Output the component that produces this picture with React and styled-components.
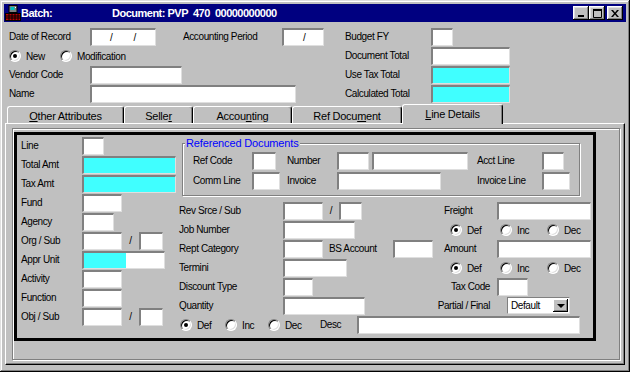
import React from 'react';
import styled, { createGlobalStyle } from 'styled-components';

const GlobalStyle = createGlobalStyle`
  html, body {
    margin: 0;
    padding: 0;
    background: #c0c0c0;
  }
  body {
    font-family: "Liberation Sans", Arial, sans-serif;
    font-size: 10px;
    letter-spacing: -0.4px;
    color: #000;
  }
`;

// read-only (computed) fields: stippled cyan, rendered as its average tint
const hatch = `
  background-color: #40ffff;
`;

const Window = styled.div`
  width: 630px;
  height: 372px;
  box-sizing: border-box;
  padding: 4px;
  background: #c0c0c0;
  box-shadow: inset -1px -1px #000, inset 1px 1px #dfdfdf, inset -2px -2px #808080, inset 2px 2px #fff;
  display: flex;
  flex-direction: column;
`;

const TitleBar = styled.div`
  height: 18px;
  flex: none;
  background: #000080;
  color: #fff;
  font-weight: bold;
  font-size: 11px;
  letter-spacing: -0.5px;
  display: flex;
  align-items: center;
  padding: 0 3px 0 1px;
  white-space: pre;
`;

const TitleText = styled.span`
  width: ${p => p.$w || 'auto'};
`;

const TitleButtons = styled.div`
  margin-left: auto;
  display: flex;
`;

const TitleButton = styled.div`
  width: 16px;
  height: 14px;
  margin-left: ${p => p.$gap || 0}px;
  box-sizing: border-box;
  background: #c0c0c0;
  box-shadow: inset -1px -1px #000, inset 1px 1px #fff, inset -2px -2px #808080, inset 2px 2px #dfdfdf;
  display: flex;
  align-items: center;
  justify-content: center;
`;

const Body = styled.div`
  flex: 1;
  display: flex;
  flex-direction: column;
`;

const TopGrid = styled.div`
  display: grid;
  grid-template-columns: 81px 93px 99px 63px 86px 1fr;
  grid-auto-rows: 19px;
  margin: 6px 0 0 5px;
  align-items: start;
`;

const Label = styled.span`
  line-height: 18px;
  white-space: nowrap;
  width: ${p => (p.$w ? `${p.$w}px` : 'auto')};
  margin-left: ${p => p.$ml || 0}px;
  flex: none;
`;

const RightLabel = styled(Label)`
  justify-self: end;
  margin-right: 7px;
`;

const Field = styled.div`
  width: ${p => p.$w}px;
  height: 18px;
  box-sizing: border-box;
  flex: none;
  border-style: solid;
  border-width: 2px 1px 1px 2px;
  border-color: #808080 #dfdfdf #dfdfdf #808080;
  background-color: #fff;
  ${p => (p.$hatch ? hatch : '')}
  display: flex;
  align-items: center;
  white-space: pre;
`;

const PartHatch = styled.div`
  width: ${p => p.$w}px;
  height: 100%;
  ${hatch}
`;

const Slashes = styled.div`
  display: flex;
  gap: ${p => p.$gap || 0}px;
  padding-left: ${p => p.$pl}px;
  line-height: 14px;
`;

const FieldGroup = styled.div`
  display: flex;
  align-items: flex-start;
  grid-column: ${p => p.$col || 'auto'};
`;

const Slash = styled.span`
  width: ${p => p.$w || 17}px;
  text-align: center;
  line-height: 18px;
  flex: none;
`;

const RadioGroup = styled.div`
  display: flex;
  align-items: center;
  height: 18px;
  padding-left: ${p => p.$pl || 0}px;
  grid-column: ${p => p.$col || 'auto'};
`;

const RadioItem = styled.label`
  display: flex;
  align-items: center;
  gap: 5px;
  width: ${p => (p.$w ? `${p.$w}px` : 'auto')};
  flex: none;
  white-space: nowrap;
`;

const RadioDot = styled.span`
  width: 12px;
  height: 12px;
  border-radius: 50%;
  box-sizing: border-box;
  background: #fff;
  border: 1px solid;
  border-color: #808080 #fff #fff #808080;
  box-shadow: inset 1px 1px #000, inset -1px -1px #dfdfdf;
  display: flex;
  align-items: center;
  justify-content: center;
  flex: none;
  &::after {
    content: '';
    width: 4px;
    height: 4px;
    border-radius: 50%;
    background: #000;
    display: ${p => (p.$on ? 'block' : 'none')};
  }
`;

const TabRow = styled.div`
  display: flex;
  align-items: flex-end;
  height: 19px;
  margin-left: 3px;
  position: relative;
  z-index: 1;
`;

const Tab = styled.div`
  width: ${p => p.$w}px;
  height: ${p => (p.$active ? 20 : 17)}px;
  margin-bottom: ${p => (p.$active ? -1 : 0)}px;
  box-sizing: border-box;
  background: #c0c0c0;
  border-top: 1px solid #fff;
  border-left: 1px solid #fff;
  border-right: 1px solid #000;
  border-radius: 3px 3px 0 0;
  box-shadow: inset -1px 0 #808080;
  display: flex;
  align-items: center;
  justify-content: center;
  padding: ${p => (p.$active ? '1px 0 3px' : '2px 0 0')};
  font-size: 11px;
  letter-spacing: -0.25px;
  white-space: nowrap;
`;

const Panel = styled.div`
  flex: 1;
  margin: 0 1px 3px 1px;
  border-top: 1px solid #fff;
  border-left: 1px solid #fff;
  border-right: 1px solid #000;
  border-bottom: 1px solid #000;
  box-shadow: inset -1px -1px #808080;
  display: flex;
  padding: 4px 4px 4px 6px;
`;

const Groove = styled.div`
  flex: 1;
  border: 1px solid #808080;
  box-shadow: inset 1px 1px #fff, 1px 1px #fff;
  padding: 3px 0 0 1px;
`;

const BlackFrame = styled.div`
  width: 582px;
  height: 209px;
  box-sizing: border-box;
  border: 3px solid #000;
  display: flex;
`;

const LeftCol = styled.div`
  width: 158px;
  padding: 2px 0 0 4px;
  display: grid;
  grid-template-columns: 61px auto;
  grid-auto-rows: 19px;
  align-content: start;
  align-items: start;
`;

const RightArea = styled.div`
  flex: 1;
  display: flex;
  flex-direction: column;
`;

const GroupBox = styled.div`
  position: relative;
  margin: 8px 0 0 3px;
  width: 398px;
  height: 53px;
  box-sizing: border-box;
  border: 1px solid #808080;
  box-shadow: inset 1px 1px #fff, 1px 1px #fff;
  padding: 8px 0 0 10px;
  display: grid;
  grid-template-columns: 59px 35px 50px 140px 65px auto;
  grid-auto-rows: 20px;
  align-items: start;
`;

const GroupTitle = styled.span`
  position: absolute;
  top: -7px;
  left: 2px;
  padding: 0 1px;
  font-size: 11px;
  letter-spacing: -0.15px;
  line-height: 13px;
  background: #c0c0c0;
  color: #0000ff;
  white-space: nowrap;
`;

const MidGrid = styled.div`
  margin-top: 6px;
  display: grid;
  grid-template-columns: 104px 161px 53px 1fr;
  grid-auto-rows: 19px;
  align-items: start;
`;

const WideRow = styled.div`
  grid-column: 1 / -1;
  display: flex;
  align-items: flex-start;
  padding-left: 1px;
`;

const SelectBox = styled.div`
  width: 63px;
  height: 17px;
  margin-left: 10px;
  box-sizing: border-box;
  border-style: solid;
  border-width: 1px;
  border-color: #808080 #dfdfdf #dfdfdf #808080;
  background: #fff;
  display: flex;
  align-items: center;
  padding: 0 1px 0 3px;
`;

const ArrowButton = styled.div`
  margin-left: auto;
  width: 15px;
  height: 13px;
  box-sizing: border-box;
  background: #c0c0c0;
  box-shadow: inset -1px -1px #000, inset 1px 1px #fff, inset -2px -2px #808080;
  display: flex;
  align-items: center;
  justify-content: center;
  &::after {
    content: '';
    border-left: 4px solid transparent;
    border-right: 4px solid transparent;
    border-top: 4px solid #000;
  }
`;

const U = styled.span`
  text-decoration: underline;
`;

function AppIcon() {
  return (
    <svg width="16" height="16" viewBox="0 0 16 16" style={{ flex: 'none' }}>
      <rect x="4" y="0.5" width="8" height="7" fill="#808080" stroke="#000" />
      <rect x="5.5" y="2" width="4" height="3" fill="#00c0c0" />
      <rect x="10" y="2" width="1" height="1" fill="#fff" />
      <rect x="0.5" y="8.5" width="15" height="7" fill="#c00000" stroke="#000" />
      <path d="M1 11h14M1 13h14M4 9v6M7 9v6M10 9v6M13 9v6" stroke="#000" strokeWidth="1" />
    </svg>
  );
}

function Radio({ on, w, children }) {
  return (
    <RadioItem $w={w}>
      <RadioDot $on={on} />
      {children}
    </RadioItem>
  );
}

function DefIncDec({ widths, pl, col }) {
  return (
    <RadioGroup $pl={pl} $col={col}>
      <Radio on w={widths[0]}>Def</Radio>
      <Radio w={widths[1]}>Inc</Radio>
      <Radio w={widths[2]}>Dec</Radio>
    </RadioGroup>
  );
}

function Pair({ a, b }) {
  return (
    <FieldGroup>
      <Field $w={a} />
      <Slash>/</Slash>
      <Field $w={b} />
    </FieldGroup>
  );
}

export default function App() {
  return (
    <>
      <GlobalStyle />
      <Window>
        <TitleBar>
          <AppIcon />
          <TitleText $w="91px">Batch:</TitleText>
          <TitleText>Document: PVP  470  00000000000</TitleText>
          <TitleButtons>
            <TitleButton>
              <svg width="8" height="8" viewBox="0 0 8 8"><rect x="1" y="6" width="6" height="2" fill="#000" /></svg>
            </TitleButton>
            <TitleButton>
              <svg width="9" height="9" viewBox="0 0 9 9"><path d="M0.5 0.5h8v8h-8z" fill="none" stroke="#000" /><rect x="0" y="0" width="9" height="2" fill="#000" /></svg>
            </TitleButton>
            <TitleButton $gap={2}>
              <svg width="8" height="7" viewBox="0 0 8 7"><path d="M0 0h2l2 2.5 2-2.5h2l-3 3.5 3 3.5h-2l-2-2.5-2 2.5h-2l3-3.5z" fill="#000" /></svg>
            </TitleButton>
          </TitleButtons>
        </TitleBar>

        <Body>
          <TopGrid>
            <Label>Date of Record</Label>
            <Field $w={66}><Slashes $pl={18} $gap={21}><span>/</span><span>/</span></Slashes></Field>
            <Label>Accounting Period</Label>
            <Field $w={42}><Slashes $pl={19}><span>/</span></Slashes></Field>
            <Label>Budget FY</Label>
            <Field $w={22} />

            <RadioGroup $col="1 / 5">
              <Radio on w={51}>New</Radio>
              <Radio>Modification</Radio>
            </RadioGroup>
            <Label>Document Total</Label>
            <Field $w={79} />

            <Label>Vendor Code</Label>
            <FieldGroup $col="2 / 5">
              <Field $w={92} />
            </FieldGroup>
            <Label>Use Tax Total</Label>
            <Field $w={79} $hatch />

            <Label>Name</Label>
            <FieldGroup $col="2 / 5">
              <Field $w={206} />
            </FieldGroup>
            <Label>Calculated Total</Label>
            <Field $w={79} $hatch />
          </TopGrid>

          <TabRow>
            <Tab $w={117}><span><U>O</U>ther Attributes</span></Tab>
            <Tab $w={69}><span>Selle<U>r</U></span></Tab>
            <Tab $w={99}><span>Accou<U>n</U>ting</span></Tab>
            <Tab $w={110}><span>Ref Docu<U>m</U>ent</span></Tab>
            <Tab $w={101} $active><span><U>L</U>ine Details</span></Tab>
          </TabRow>

          <Panel>
            <Groove>
              <BlackFrame>
                <LeftCol>
                  <Label>Line</Label>
                  <Field $w={22} />
                  <Label>Total Amt</Label>
                  <Field $w={94} $hatch />
                  <Label>Tax Amt</Label>
                  <Field $w={94} $hatch />
                  <Label>Fund</Label>
                  <Field $w={40} />
                  <Label>Agency</Label>
                  <Field $w={32} />
                  <Label>Org / Sub</Label>
                  <Pair a={40} b={24} />
                  <Label>Appr Unit</Label>
                  <Field $w={83}><PartHatch $w={42} /></Field>
                  <Label>Activity</Label>
                  <Field $w={40} />
                  <Label>Function</Label>
                  <Field $w={40} />
                  <Label>Obj / Sub</Label>
                  <Pair a={40} b={24} />
                </LeftCol>

                <RightArea>
                  <GroupBox>
                    <GroupTitle>Referenced Documents</GroupTitle>
                    <Label>Ref Code</Label>
                    <Field $w={24} />
                    <Label>Number</Label>
                    <FieldGroup>
                      <Field $w={32} />
                      <Field $w={96} style={{ marginLeft: 3 }} />
                    </FieldGroup>
                    <Label>Acct Line</Label>
                    <Field $w={22} />

                    <Label>Comm Line</Label>
                    <Field $w={28} />
                    <Label>Invoice</Label>
                    <Field $w={104} />
                    <Label>Invoice Line</Label>
                    <Field $w={28} />
                  </GroupBox>

                  <MidGrid>
                    <Label>Rev Srce / Sub</Label>
                    <FieldGroup>
                      <Field $w={40} />
                      <Slash $w={16}>/</Slash>
                      <Field $w={23} />
                    </FieldGroup>
                    <Label>Freight</Label>
                    <Field $w={94} />

                    <Label>Job Number</Label>
                    <Field $w={72} />
                    <DefIncDec widths={[50, 47, 45]} pl={6} col="3 / 5" />

                    <Label>Rept Category</Label>
                    <FieldGroup>
                      <Field $w={40} />
                      <Label $ml={6} $w={64}>BS Account</Label>
                      <Field $w={40} />
                    </FieldGroup>
                    <Label>Amount</Label>
                    <Field $w={94} />

                    <Label>Termini</Label>
                    <Field $w={64} />
                    <DefIncDec widths={[50, 47, 45]} pl={6} col="3 / 5" />

                    <Label>Discount Type</Label>
                    <Field $w={30} />
                    <RightLabel>Tax Code</RightLabel>
                    <Field $w={31} />

                    <Label>Quantity</Label>
                    <Field $w={82} />
                    <RightLabel>Partial / Final</RightLabel>
                    <SelectBox>
                      <span>Default</span>
                      <ArrowButton />
                    </SelectBox>

                    <WideRow>
                      <RadioGroup>
                        <Radio on w={45}>Def</Radio>
                        <Radio w={43}>Inc</Radio>
                        <Radio w={52}>Dec</Radio>
                      </RadioGroup>
                      <Label $w={37}>Desc</Label>
                      <Field $w={223} />
                    </WideRow>
                  </MidGrid>
                </RightArea>
              </BlackFrame>
            </Groove>
          </Panel>
        </Body>
      </Window>
    </>
  );
}
